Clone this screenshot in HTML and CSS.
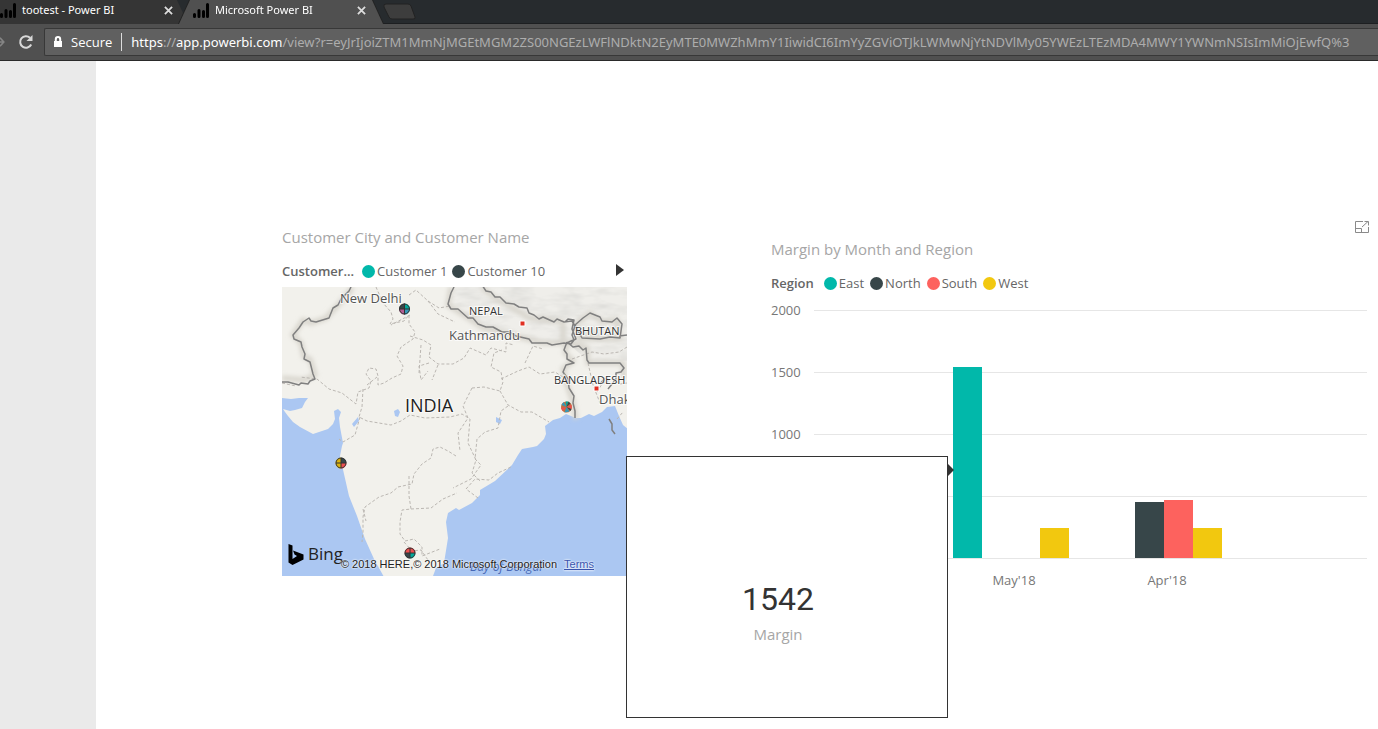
FILE: index.html
```html
<!DOCTYPE html>
<html lang="en">
<head>
<meta charset="utf-8">
<title>Microsoft Power BI</title>
<link rel="stylesheet" href="styles.css">
</head>
<body>
<header class="browser">
  <div class="tab-strip">
    <div class="tab">
      <svg class="tab-icon" viewBox="0 0 16 16" aria-hidden="true"><path d="M1.500 12.500v2M6 8.500v6M10.500 9.500v5M14.500 2.500v12" /></svg>
      <span class="tab-title">tootest - Power BI</span>
      <button class="tab-close" aria-label="Close tootest tab"><svg viewBox="0 0 10 10"><path d="M1 1l8 8M9 1l-8 8"/></svg></button>
    </div>
    <div class="tab-edge">
      <div class="tab tab-active">
        <svg class="tab-icon" viewBox="0 0 16 16" aria-hidden="true"><path d="M1.500 12.500v2M6 8.500v6M10.500 9.500v5M14.500 2.500v12" /></svg>
        <span class="tab-title">Microsoft Power BI</span>
        <button class="tab-close" aria-label="Close Microsoft Power BI tab"><svg viewBox="0 0 10 10"><path d="M1 1l8 8M9 1l-8 8"/></svg></button>
      </div>
    </div>
    <button class="new-tab" aria-label="New tab"><svg viewBox="0 0 34 18"><path d="M3 1h22q2 0 3 2l4 11q1 2-2 2H9q-2 0-3-2L1 4q-1-3 2-3z"/></svg></button>
  </div>
  <div class="toolbar">
    <svg class="forward" viewBox="0 0 6 12" aria-hidden="true"><path d="M0 1l4.500 5L0 11M0 6h4"/></svg>
    <button class="reload" aria-label="Reload"><svg viewBox="0 0 16 16"><path class="reload-arc" d="M13.200 10.500A5.800 5.800 0 1 1 12 3.800"/><path class="reload-head" d="M14.500 1v6h-6z"/></svg></button>
    <div class="address">
      <svg class="lock" viewBox="0 0 10 12" aria-hidden="true"><path class="lock-body" d="M1 5h8v6H1z"/><path class="lock-loop" d="M2.800 5V3.200a2.200 2.200 0 0 1 4.400 0V5"/></svg>
      <span class="secure">Secure</span>
      <span class="url"><b>https</b>://<b>app.powerbi.com</b>/view?r=eyJrIjoiZTM1MmNjMGEtMGM2ZS00NGEzLWFlNDktN2EyMTE0MWZhMmY1IiwidCI6ImYyZGViOTJkLWMwNjYtNDVlMy05YWEzLTEzMDA4MWY1YWNmNSIsImMiOjEwfQ%3</span>
    </div>
  </div>
</header>

<div class="page">
  <aside class="gutter"></aside>
  <main class="report">
    <section class="visual map-visual">
      <h2 class="visual-title">Customer City and Customer Name</h2>
      <div class="legend">
        <strong class="legend-name">Customer...</strong>
        <ul class="legend-list">
          <li class="key east">Customer 1</li>
          <li class="key north">Customer 10</li>
        </ul>
        <button class="legend-next" aria-label="Next customers"><svg viewBox="0 0 8 12"><path d="M0 0l8 6-8 6z"/></svg></button>
      </div>
      <div class="map">
        <svg class="map-art" viewBox="0 0 345 289" role="img" aria-label="Map of India with customer cities">
          <defs>
            <filter id="relief" x="0" y="0" width="100%" height="100%">
              <feTurbulence type="fractalNoise" baseFrequency="0.04 0.12" numOctaves="3" seed="4"/>
              <feColorMatrix values="0 0 0 0 0.6  0 0 0 0 0.6  0 0 0 0 0.58  0.900 0 0 0 -0.330"/>
            </filter>
            <filter id="soft"><feGaussianBlur stdDeviation="2"/></filter>
            <clipPath id="hills"><path d="M172 0H345V74H306L285 55 281 56 241 51 201 41 168 21z"/></clipPath>
          </defs>
          <rect class="land" width="345" height="289"/>
          <g clip-path="url(#hills)"><rect class="hills" width="345" height="80"/><rect width="345" height="80" filter="url(#relief)"/></g>
          <path class="sea" d="M0 111l9 1 8-1 9 0-3 4-3 6-7 2-5 1-7-2 2 3 3 4 5 6 7 5 13 7 15-5 5-5 2-5-1-8 4-2 3 3-2 6 1 9 3 16-1 3-2 10 4 18 5 22 8 20 8 23 9 20 10 18H0z"/>
          <path class="sea" d="M151 289l3-8 8-5 4-25-2-16 2-9 8-5 3 2 13-7 8-8 0-5 15-9 17-16 6-10 4-6 11-2 4-1 7-7 2-5-1-8 8-6 7-2 6-4 10 4 5 0 8-4 5 2 8-4 5-5 8-1 4 10 4 9 5 4V289z"/>
          <path class="sea" d="M112 124l4-2 2 3-2 5-3-1zM72 140l5-6-1-4-6 7zM214 130l6 3-2 4-4-2z"/>
          <path class="halo" filter="url(#soft)" d="M69 0V3L56 18 44 31 29 36 21 33 11 48 19 56 22 70 28 72 33 88 22 93 0 91M169 0L166 18 186 31 201 41 241 51 261 56H281V35L248 31 213 11 199 0M293 38l15-12 12 9 15-2 3 18-40 1zM285 55l-2 11 8 8-10 8 4 16 6 17 3 17M285 55l20 6 1 15h35l1 16"/>
          <g class="state">
            <path d="M94 0l7 16 8 9 2 7-3 5 14-3 5-6v9l6 8-2 7-12 8-4 9 6 10-2 8-9 4-8 5-6 2v-9l-2-7-7-1-3 6 5 7-2 7-11 4-2 12-14-11-13-4-12-10-17-2M127 8L134 3l12 11 11 7 11-2M128 49l13 4 8 5-2 12 9 7 15 0 11-6 6-10 16 7 5-7 15 4 0-9 8 2M147 76l-10 3 2 14 7-9M156 78l-6 15M81 102l-1 18-3 10 8 4 24 4 10-4 9-6 15 3 25-1 12-3 8 5-2 24 8 17-4 13 8 8"/>
            <path d="M78 130l-5 18-12 7-4-3M139 58l-2 28M190 101l12-1 16 4 3-9-2-10-10-5 3-14 8-3M219 92l17-8 11-4 11 7 15-2 11 7M218 104l8 14 13 7 11 0 17 10M226 119l-7 5-3 17-13 4-8 7-2 20 6 6-10 14-18 9M196 211l-12-9 9-10 14 1 9-7 13-6M174 169l-8-5-8-4-7 2-2 9-9 6-8 10-2 10-14 3-7 6-12 4-14 10-2 10 0 15-1 10M127 189l0 20 2 13-9 1-2 12 0 12 5 7 9-2 8 8 0 9 18-7M129 222l20-1 12-9 14-6M81 222l3 12M128 28l-19 10M243 76l8-17 10 3M290 72l20-7 12 2 15-2 8-5M315 105l5-8 10-5 8 5 7-1M190 101l-9 18 5 12-10 15 2 18"/>
            <path d="M146 14l10 13 17 8M65 15l-4-9M85 98l10-8M122 255l8 9 9-1 7 10M0 96l14 3M306 76l5 22 7 18M335 132l6-7"/>
          </g>
          <path class="border" d="M69 0l-2 4-8 8-3 6-5 3-4 10-13 4-5-1-2-3-6 4-4 6-6 7 1 4 7 3 1 5 3 7-1 5 6 3 3 12 2 5-5 2-2 3-7-1-2 2-11-3H0M172 0l-3 6-3 11 3 5 7 0 10 9 5 0 5 6 8 3 7 0 9 5 8 0 6 4 13 3 3 4 15 0 5 2 12-2 7 1 3-4-2-5 3-9-3-5-8 1-7-3-3 3-11-5-4 2-5-4-5-2-2-5-8-1-5-3-8-1-6-6-5 0-4-5-5-1-4-6-7-2M283 35l3-3 6 1-2 9 4 10-5 2-4 2M293 38l8-7 7-5 10 4 2 4 10 1 5-4 5 6-2 14-10-1-10 2-18-1zM285 55l-3 8 3 4 0 5 7 4-8 2-3 7 5 7 1 9 5 8-1 7 2 8 0 7M285 55l6 5 6-1 4 4 3-2 1 12 2 3h31l4 5-3 4-5 1 0 6-8 10M327 132l3 5 0 6 3 4M318 97l5-6M345 48l-8 1"/>
          <g class="capitals"><path d="M238 34h5v5h-5zM312 99h5v5h-5z"/></g>
          <g class="place">
            <text x="58" y="16" class="city">New Delhi</text>
            <text x="167" y="53" class="city">Kathmandu</text>
            <text x="317" y="117" class="city">Dhaka</text>
            <text x="187" y="28" class="nation">NEPAL</text>
            <text x="293" y="48" class="nation">BHUTAN</text>
            <text x="272" y="97" class="nation">BANGLADESH</text>
            <text x="123" y="125" class="india">INDIA</text>
            <text x="188" y="284" class="water">Bay of Bengal</text>
          </g>
          <g class="pin"><path class="s1" d="M122.500 22V16.500A5.500 5.500 0 0 0 117 22z"/><path class="s0" d="M122.500 22h5.500a5.500 5.500 0 0 0-5.500-5.500z"/><path class="s5" d="M122.500 22v5.500A5.500 5.500 0 0 1 117 22z"/><path class="s6" d="M122.500 22h5.500a5.500 5.500 0 0 1-5.500 5.500z"/><path class="spokes" d="M117 22h11M122.500 16.500v11"/><circle cx="122.500" cy="22" r="5"/></g>
          <g class="pin"><path class="s3" d="M59 176v-5.500a5.500 5.500 0 0 0-5.500 5.500zM59 176v5.500a5.500 5.500 0 0 1-5.500-5.500z"/><path class="s1" d="M59 176h5.500a5.500 5.500 0 0 0-5.500-5.500z"/><path class="s2" d="M59 176h5.500a5.500 5.500 0 0 1-5.500 5.500z"/><path class="spokes" d="M54 176h10M59 171v10"/><circle cx="59" cy="176" r="5"/></g>
          <g class="pin"><path class="s2" d="M128 266v-5.500a5.500 5.500 0 0 0-5.500 5.500zM128 266h5.500a5.500 5.500 0 0 0-5.500-5.500z"/><path class="s0" d="M128 266h5.500a5.500 5.500 0 0 1-5.500 5.500z"/><path class="s1" d="M128 266v5.500a5.500 5.500 0 0 1-5.500-5.500z"/><path class="spokes" d="M123 266h10M128 261v10"/><circle cx="128" cy="266" r="5"/></g>
          <g class="pin"><circle class="s7" cx="284.500" cy="120" r="5.500"/><path class="s6" d="M284.500 120l-5-2 2-3zM284.500 120l3 4.500-5 1z"/><path class="s2" d="M284.500 120l5-2 0 4zM284.500 120l-4 4-1.500-3z"/><path class="s0" d="M284.500 120l-1-5.500h3z"/><path class="s1" d="M284.500 120l4-3.500-2-2zM284.500 120l4 4 1-2z"/></g>
          <path class="bing-mark" d="M6.500 257l4 1.500v13.500l4.500-3-2.500-1.500-1.500-4 10.500 4v5L10.500 278l-4-2.500z"/>
          <text x="26" y="273" class="bing">Bing</text>
        </svg>
        <p class="attribution"><span>© 2018 HERE,© 2018 Microsoft Corporation</span><a href="#terms">Terms</a></p>
      </div>
    </section>

    <section class="visual chart-visual">
      <button class="focus" aria-label="Focus mode"><svg viewBox="0 0 16 14"><path d="M9 1.500H1.500v11h13V7M1.500 8.500h6v4M8 7l6-5.500M10.500 1.500h4v4"/></svg></button>
      <h2 class="visual-title">Margin by Month and Region</h2>
      <div class="legend">
        <strong class="legend-name">Region</strong>
        <ul class="legend-list">
          <li class="key east">East</li>
          <li class="key north">North</li>
          <li class="key south">South</li>
          <li class="key west">West</li>
        </ul>
      </div>
      <div class="chart">
        <div class="axis"><span>2000</span><span>1500</span><span>1000</span><span>500</span><span>0</span></div>
        <div class="plot">
          <div class="group">
            <div class="bars">
              <i class="bar east" style="height:77.1%"></i><i class="bar north" style="height:0%"></i><i class="bar south" style="height:0%"></i><i class="bar west" style="height:12.1%"></i>
            </div>
            <span class="month">May'18</span>
          </div>
          <div class="group">
            <div class="bars">
              <i class="bar east" style="height:0%"></i><i class="bar north" style="height:22.5%"></i><i class="bar south" style="height:23.3%"></i><i class="bar west" style="height:12%"></i>
            </div>
            <span class="month">Apr'18</span>
          </div>
        </div>
      </div>
    </section>

    <div class="tooltip" role="tooltip">
      <span class="tooltip-value">1542</span>
      <span class="tooltip-label">Margin</span>
    </div>
  </main>
</div>
</body>
</html>
```
FILE: styles.css
```css
* { box-sizing: border-box; }

:root {
  --east: #01b8aa;
  --north: #374649;
  --south: #fd625e;
  --west: #f2c80f;
}

body {
  margin: 0;
  min-height: 100vh;
  display: flex;
  flex-direction: column;
  overflow: hidden;
  background: #fff;
  font-family: "Open Sans", "Noto Sans", sans-serif;
}

button {
  padding: 0;
  border: 0;
  background: none;
  font: inherit;
  color: inherit;
}

svg { display: block; }

/* Browser frame */
.browser { color: #fff; }

.tab-strip {
  display: flex;
  height: 24px;
  background: #272b2e;
  border-bottom: 1px solid #1d1f21;
}

.tab {
  display: flex;
  align-items: center;
  width: 188px;
  height: 24px;
  padding: 0 15px 4px 0;
  background: #353535;
  font-family: "Noto Sans", sans-serif;
  font-size: 11px;
  line-height: 16px;
  clip-path: polygon(0 0, 177px 0, 100% 100%, 0 100%);
}

.tab-edge {
  margin-left: -9px;
  filter: drop-shadow(1px 0 0 #222) drop-shadow(-1px 0 0 #222);
}

.tab-active {
  width: 204px;
  padding: 0 17px 4px 14px;
  background: #505050;
  clip-path: polygon(11px 0, 193px 0, 100% 100%, 0 100%);
}

.tab-icon {
  width: 16px;
  height: 16px;
  margin-right: 6px;
  fill: none;
  stroke: #000;
  stroke-width: 3;
  stroke-linecap: round;
}

.tab-title { flex: 1; white-space: nowrap; }

.tab-close svg {
  width: 9px;
  height: 9px;
  stroke: #ddd;
  stroke-width: 2;
}

.new-tab svg {
  width: 34px;
  height: 18px;
  fill: #3d3d3d;
  stroke: #222;
}

.toolbar {
  display: flex;
  align-items: center;
  gap: 13px;
  height: 37px;
  padding-bottom: 1px;
  background: #505050;
  border-bottom: 1px solid #2a2a2a;
}

.forward {
  width: 5px;
  height: 12px;
  fill: none;
  stroke: #858585;
  stroke-width: 2;
}

.reload svg { width: 16px; height: 16px; }
.reload-arc { fill: none; stroke: #d8d8d8; stroke-width: 2; }
.reload-head { fill: #d8d8d8; }

.address {
  flex: 1;
  min-width: 0;
  display: flex;
  align-items: center;
  height: 28px;
  margin-left: -3px;
  padding-left: 8px;
  border: 1px solid #383838;
  border-right: 0;
  border-radius: 2px 0 0 2px;
  background: #606060;
  font-size: 13px;
  line-height: 18px;
  white-space: nowrap;
  overflow: hidden;
}

.lock { width: 10px; height: 12px; margin-right: 8px; }
.lock-body { fill: #fff; }
.lock-loop { fill: none; stroke: #fff; stroke-width: 2; }

.secure {
  padding-right: 9px;
  border-right: 1px solid #ddd;
}

.url {
  padding-left: 9px;
  font-family: "Noto Sans", sans-serif;
  color: #adadad;
}

.url b { font-weight: 400; color: #fff; }

/* Report page */
.page { flex: 1; display: flex; }
.gutter { width: 96px; background: #eaeaea; }

.report {
  position: relative;
  flex: 1;
  display: flex;
  gap: 144px;
  padding: 156px 8px 0 186px;
}

.visual-title {
  margin: 0;
  font-size: 15px;
  font-weight: 400;
  line-height: 20px;
  color: #a6a6a6;
}

.legend {
  display: flex;
  align-items: center;
  height: 20px;
  margin-top: 14px;
  font-size: 13px;
  line-height: 20px;
  color: #666;
}

.legend-name { margin-right: 10px; font-weight: 600; }

.legend-list {
  display: flex;
  gap: 6px;
  margin: 0;
  padding: 0;
  list-style: none;
}

.key { display: flex; align-items: center; gap: 2px; }

.key::before {
  content: "";
  width: 13px;
  height: 13px;
  border-radius: 50%;
  background: var(--tone);
}

.east { --tone: var(--east); }
.north { --tone: var(--north); }
.south { --tone: var(--south); }
.west { --tone: var(--west); }

.legend-next { margin: 0 3px 2px auto; }
.legend-next svg { width: 8px; height: 12px; fill: #333; }

/* Map */
.map-visual { width: 345px; padding-top: 10px; }
.map-visual .legend-name { margin-right: 8px; }
.map-visual .legend-list { gap: 5px; }
.map { position: relative; margin-top: 6px; }
.map-art { width: 100%; height: auto; }
.land { fill: #f2f1ec; }
.hills { fill: #efeeea; }
.sea { fill: #abc7f2; }
.halo { fill: none; stroke: #d8d5cd; stroke-width: 5; }
.border { fill: none; stroke: #808080; stroke-width: 1.5; stroke-linejoin: round; }
.state { fill: none; stroke: #bbb7b2; stroke-dasharray: 3 2; }
.capitals { fill: #e03022; stroke: #fff; }

.place {
  fill: #555;
  stroke: #fff;
  stroke-opacity: 0.7;
  stroke-width: 2;
  paint-order: stroke;
}

.city { font-size: 13px; }
.nation { font-size: 11px; fill: #333; }
.india { font-size: 18px; fill: #222; }
.water { font-size: 12px; font-style: italic; fill: #4667b5; stroke: none; }

.s0 { fill: #01a89b; }
.s1 { fill: #374649; }
.s2 { fill: #ed4f50; }
.s3 { fill: #dcb30e; }
.s5 { fill: #b35d94; }
.s6 { fill: #3599b8; }
.s7 { fill: #c46e3e; }
.pin circle:not([class]) { fill: none; stroke: #333; }
.spokes { stroke: #333; }

.bing-mark { fill: #000; }
.bing { font-size: 17px; fill: #222; }

.attribution {
  position: absolute;
  right: 33px;
  bottom: 5px;
  display: flex;
  gap: 7px;
  margin: 0;
  font: 11px/14px "Liberation Sans", sans-serif;
  color: #222;
  white-space: nowrap;
  text-shadow: 0 0 2px #fff, 0 0 2px #fff;
}

.attribution a { color: #3953ad; }

/* Column chart */
.chart-visual { flex: 1; display: flex; flex-direction: column; }
.focus { align-self: flex-end; margin-top: 3px; }
.focus svg { width: 16px; height: 14px; fill: none; stroke: #8a8a8a; }
.chart-visual .visual-title { margin-top: 5px; }

.chart { display: flex; margin: 7px 3px 0 0; color: #777; }

.axis {
  display: flex;
  flex-direction: column;
  gap: 42px;
  width: 43px;
  font-size: 13px;
  line-height: 20px;
}

.plot {
  flex: 1;
  display: flex;
  gap: 37px;
  height: 249px;
  margin-top: 10px;
  padding-left: 139px;
  background: repeating-linear-gradient(#e6e6e6 0 1px, transparent 1px 62px);
}

.bars { display: flex; align-items: flex-end; height: 248px; }
.bar { width: 29px; background: var(--tone); }

.month {
  display: block;
  margin: 12px 0 0 8px;
  font-size: 13px;
  line-height: 20px;
  width: 106px;
  text-align: center;
}

/* Report tooltip */
.tooltip {
  position: absolute;
  left: 530px;
  top: 395px;
  width: 322px;
  height: 262px;
  padding: 50px 18px 0 0;
  display: flex;
  flex-direction: column;
  align-items: center;
  justify-content: center;
  gap: 6px;
  border: 1px solid #333;
  background: #fff;
}

.tooltip::after {
  content: "";
  position: absolute;
  left: 100%;
  top: 6px;
  border: 7px solid transparent;
  border-left-color: #333;
  border-right-width: 0;
}

.tooltip-value { font: 32px/38px Roboto, sans-serif; color: #333; }
.tooltip-label { font-size: 15px; line-height: 20px; color: #a6a6a6; }
```
